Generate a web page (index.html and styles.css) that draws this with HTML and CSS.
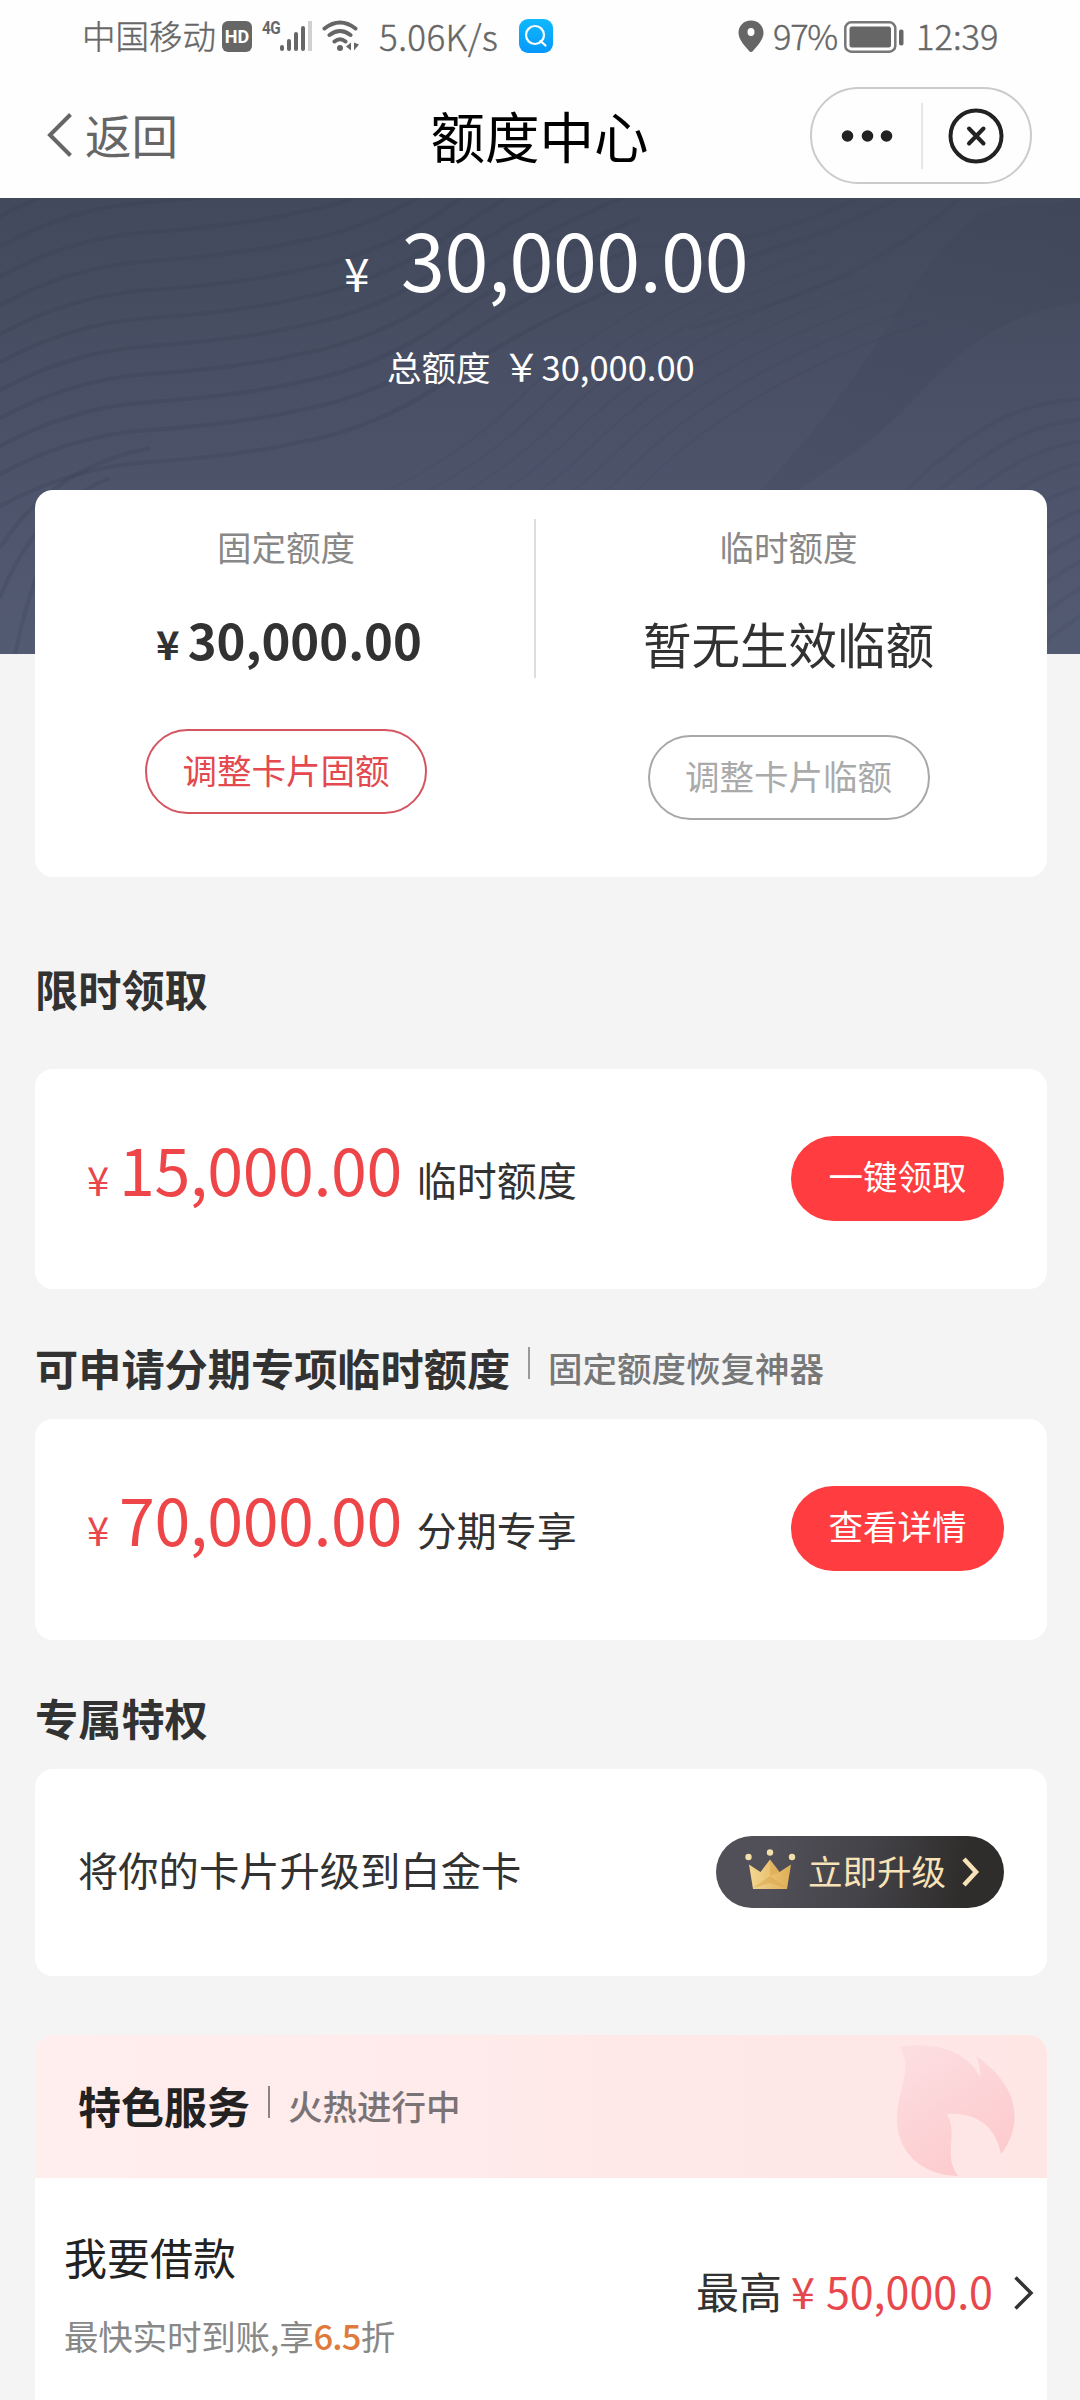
FILE: index.html
```html
<!DOCTYPE html>
<html lang="zh-CN">
<head>
<meta charset="utf-8">
<title>额度中心</title>
<link rel="stylesheet" href="styles.css">
</head>
<body>
<div class="screen">
  <header class="status">
    <span class="carrier">中国移动</span>
    <span class="hd">HD</span>
    <span class="net">4G</span>
    <svg class="signal" width="34" height="32" viewBox="0 0 34 32" stroke="#666" stroke-width="4" stroke-linecap="round">
      <path d="M2 27v2M9 21v8M16 14v15M23 8v21"/>
      <path d="M30 1v30" stroke="#d0d0d0" stroke-linecap="butt"/>
    </svg>
    <svg class="wifi" width="38" height="32" viewBox="0 0 38 32" fill="none" stroke="#666" stroke-width="4" stroke-linecap="round">
      <path d="M2.500 8.500Q18-3.500 33.500 8.500M7.500 15Q18 7 28.500 15M12.500 21.500Q18 17 23.500 21.500"/>
      <circle cx="18" cy="28" r="3" fill="#666" stroke="none"/>
      <path d="M29 22.500v8l-5-4zM32 22.500v8l5-6z" fill="#666" stroke="none"/>
    </svg>
    <span class="speed">5.06K/s</span>
    <span class="search-app">
      <svg width="34" height="34" viewBox="0 0 34 34" fill="none" stroke="#fff" stroke-width="2.200" stroke-linecap="round"><circle cx="16" cy="16" r="9"/><path d="M21.500 22l5 4.500"/></svg>
    </span>
    <svg class="pin" width="26" height="33" viewBox="0 0 26 33"><path fill="#666" fill-rule="evenodd" d="M13 0.500C5.500 .5.500 6 .5 13 .5 20 8 27 11 31q2 2 4 0C18 27 25.500 20 25.500 13 25.500 6 20.500.5 13 .5zM13 8a3.500 4 0 1 1 0 8 3.500 4 0 1 1 0-8z"/></svg>
    <span class="percent">97%</span>
    <svg class="battery" width="60" height="32" viewBox="0 0 60 32"><rect x="1.300" y="1.300" width="50" height="29.400" rx="6" fill="none" stroke="#777" stroke-width="2.500"/><rect x="5.500" y="5.500" width="41.500" height="21" rx="2.500" fill="#666"/><rect x="55" y="8.500" width="4.500" height="16" rx="2" fill="#666"/></svg>
    <span class="time">12:39</span>
  </header>

  <nav class="nav">
    <div class="back">
      <svg width="26" height="44" viewBox="0 0 26 44" fill="none" stroke="#666" stroke-width="4"><path d="M23.500 1.500L3 22l20.500 20.500"/></svg>
      <span>返回</span>
    </div>
    <h1 class="title">额度中心</h1>
    <div class="capsule">
      <svg class="dots" width="52" height="14" viewBox="0 0 52 14" fill="#222"><circle cx="6.500" cy="7" r="5.800"/><circle cx="26.500" cy="7" r="5.800"/><circle cx="45.500" cy="7" r="5.800"/></svg>
      <span class="capsule-line"></span>
      <svg class="close" width="56" height="56" viewBox="0 0 56 56" fill="none" stroke="#222" stroke-width="4" stroke-linecap="round"><circle cx="28" cy="28" r="25.500"/><path d="M21 20.500l14.500 15M35.500 20.500L21 35.500"/></svg>
    </div>
  </nav>

  <section class="hero">
    <svg class="waves" width="1080" height="457" viewBox="0 0 1080 457" fill="none">
      <defs>
        <path id="ripple" d="M-20 90Q60 40 150 34T300 14Q380 0 450-50T640-150"/>
        <path id="arc" d="M850 470C850 400 870 320 930 270S1030 200 1100 200"/>
        <path id="weave" d="M250 340Q420 300 520 200T800 40"/>
        <linearGradient id="shade" x1="0" y1="0" x2="1" y2="1">
          <stop offset="0" stop-color="#333a50" stop-opacity="0"/>
          <stop offset=".48" stop-color="#333a50" stop-opacity=".12"/>
          <stop offset="1" stop-color="#333a50" stop-opacity=".3"/>
        </linearGradient>
      </defs>
      <path fill="url(#shade)" d="M560 457C740 330 810 250 900 110S1000 20 1080 0V105C960 120 930 200 860 250S680 360 600 457z"/>
      <g stroke="#343c52" stroke-opacity=".2" stroke-width="4">
        <use href="#ripple" y="-60"/><use href="#ripple" y="-30"/><use href="#ripple"/><use href="#ripple" y="29"/><use href="#ripple" y="58"/><use href="#ripple" y="86"/><use href="#ripple" y="114"/><use href="#ripple" y="142"/><use href="#ripple" y="170"/><use href="#ripple" y="198"/><use href="#ripple" y="230"/>
        <path d="M0 350Q50 270 150 250M0 400Q35 310 110 280M15 457Q30 380 60 330"/>
      </g>
      <g stroke="#383f56" stroke-opacity=".1" stroke-width="2">
        <use href="#weave"/><use href="#weave" x="18" y="12"/><use href="#weave" x="36" y="24"/><use href="#weave" x="54" y="36"/><use href="#weave" x="72" y="48"/><use href="#weave" x="90" y="60"/><use href="#weave" x="108" y="72"/><use href="#weave" x="126" y="84"/>
      </g>
      <g stroke="#39415a" stroke-opacity=".17" stroke-width="4">
        <use href="#arc"/><use href="#arc" x="12" y="20"/><use href="#arc" x="24" y="40"/><use href="#arc" x="36" y="60"/><use href="#arc" x="48" y="80"/><use href="#arc" x="60" y="100"/><use href="#arc" x="72" y="120"/><use href="#arc" x="84" y="140"/><use href="#arc" x="96" y="160"/><use href="#arc" x="108" y="180"/>
        <path d="M540 40Q600 50 680 48T860 0M600 90Q760 70 900 0M690 130Q860 90 960 0"/>
      </g>
    </svg>
    <div class="available"><span class="yen">¥</span><span class="sum">30,000.00</span></div>
    <div class="total"><span>总额度</span><span class="total-yen">￥</span><span>30,000.00</span></div>
  </section>

  <main class="content">
    <section class="card limits">
      <div class="limit">
        <div class="limit-name">固定额度</div>
        <div class="limit-sum"><span class="limit-yen">¥</span>30,000.00</div>
        <button class="pill pill-red">调整卡片固额</button>
      </div>
      <div class="limit-line"></div>
      <div class="limit">
        <div class="limit-name">临时额度</div>
        <div class="limit-none">暂无生效临额</div>
        <button class="pill pill-grey">调整卡片临额</button>
      </div>
    </section>

    <h2 class="heading heading-claim">限时领取</h2>
    <section class="card offer">
      <span class="offer-yen">¥</span><span class="offer-sum">15,000.00</span><span class="offer-name">临时额度</span>
      <button class="action">一键领取</button>
    </section>

    <h2 class="heading heading-apply">可申请分期专项临时额度<span class="bar"></span><span class="hint">固定额度恢复神器</span></h2>
    <section class="card offer offer-apply">
      <span class="offer-yen">¥</span><span class="offer-sum">70,000.00</span><span class="offer-name">分期专享</span>
      <button class="action">查看详情</button>
    </section>

    <h2 class="heading heading-perk">专属特权</h2>
    <section class="card perk">
      <span class="perk-text">将你的卡片升级到白金卡</span>
      <button class="upgrade">
        <svg class="crown" width="52" height="42" viewBox="0 0 52 42">
          <defs><linearGradient id="gold" x1="0" x2="1"><stop offset="0" stop-color="#f3d791"/><stop offset="1" stop-color="#dfae55"/></linearGradient></defs>
          <path fill="url(#gold)" d="M5 15.500l11.500 7.500L26 10.500l9.500 12.500L47 15.500 43 40H9z"/>
          <path fill="#d9a44c" fill-opacity=".5" d="M26 10.500l9.500 12.500L26 27zM9 39l17-12 17 12-17-5z"/>
          <circle cx="4.500" cy="8" r="3.200" fill="#f2dfaa"/><circle cx="26" cy="3.500" r="3.200" fill="#f2dfaa"/><circle cx="48" cy="8" r="3.200" fill="#f2dfaa"/>
        </svg>
        <span>立即升级</span>
        <svg class="go" width="18" height="30" viewBox="0 0 18 30" fill="none" stroke="#f8e2b8" stroke-width="4.500"><path d="M2 2l12 13L2 28"/></svg>
      </button>
    </section>

    <section class="card service">
      <div class="service-head">
        <h2 class="service-title">特色服务</h2><span class="bar"></span><span class="hint service-hint">火热进行中</span>
        <svg class="flame" width="118" height="132" viewBox="0 0 118 132">
          <defs><linearGradient id="fire" x1="0" y1="0" x2=".55" y2="1"><stop offset="0" stop-color="#fcdfe2"/><stop offset="1" stop-color="#fdcbce"/></linearGradient></defs>
          <path fill="url(#fire)" d="M3 2C45-4 72 10 83 32Q84 22 79 11C132 48 120 89 104 109C99 82 80 67 50 69C62 91 45 109 61 131C25 130 1 108 0 76C-1 48 17 25 3 2z"/>
        </svg>
      </div>
      <div class="service-row">
        <div class="loan">
          <div class="loan-name">我要借款</div>
          <div class="loan-note">最快实时到账,享<b class="rate">6.5</b>折</div>
        </div>
        <div class="max"><span>最高</span><span class="max-yen">¥</span><span class="max-sum">50,000.0</span>
          <svg class="more" width="22" height="34" viewBox="0 0 22 34" fill="none" stroke="#333" stroke-width="3.500"><path d="M2.500 1.500L18 17 2.500 32.500"/></svg>
        </div>
      </div>
    </section>
  </main>
</div>
</body>
</html>
```
FILE: styles.css
```css
* { box-sizing: border-box; }
body {
  margin: 0;
  background: #f4f4f4;
  color: #323232;
  font-family: "Noto Sans CJK SC", sans-serif;
}
h1, h2 { margin: 0; }
button { font: inherit; padding: 0; border: 0; }
svg { display: block; flex: none; }
span { white-space: nowrap; }
.screen { width: 1080px; height: 2400px; overflow: hidden; }

/* status bar */
.status {
  display: flex;
  height: 74px;
  padding-left: 82px;
  background: #fefefe;
  color: #666;
  line-height: 74px;
}
.carrier { width: 140px; font-size: 33.500px; line-height: 70px; font-weight: 300; -webkit-text-stroke: .4px #666; }
.hd {
  width: 30px;
  height: 31px;
  margin-top: 21px;
  border-radius: 6px;
  background: #666;
  color: #fff;
  font: bold 18px/31px Roboto, sans-serif;
  text-align: center;
}
.net { width: 26px; margin-left: 10px; font: bold 18px/55px Roboto, sans-serif; letter-spacing: -.5px; transform: scaleX(.85); transform-origin: left; }
.signal { margin: 20px 0 0 -8px; }
.wifi { margin: 20px 0 0 8px; }
.speed { width: 139px; margin-left: 19px; font-size: 35px; letter-spacing: .4px; font-weight: 300; -webkit-text-stroke: .4px #666; line-height: 71px; }
.search-app { width: 34px; height: 34px; margin: 19px 0 0 1px; border-radius: 9px; background: linear-gradient(#0fb9fb, #0798fb); }
.pin { margin: 20px 0 0 185px; }
.percent { width: 71px; margin-left: 9px; font-size: 34.500px; letter-spacing: -1.300px; font-weight: 300; -webkit-text-stroke: .4px #666; line-height: 71px; }
.battery { margin-top: 21px; }
.time { margin-left: 12px; font-size: 34.500px; font-weight: 300; -webkit-text-stroke: .4px #666; line-height: 71px; }

/* navigation */
.nav {
  display: grid;
  grid-template-columns: 1fr auto 1fr;
  height: 124px;
  padding: 0 48px 0 47px;
  background: #fefefe;
}
.back { display: flex; color: #666; font-size: 46.500px; line-height: 119px; }
.back svg { margin: 39px 12px 0 0; }
.title { color: #000; font-size: 54.500px; font-weight: 400; line-height: 122px; }
.capsule {
  display: flex;
  align-items: center;
  justify-self: end;
  width: 222px;
  height: 97px;
  margin-top: 13px;
  border: 2px solid #cbcbcb;
  border-radius: 49px;
}
.dots { margin-left: 29px; }
.capsule-line { width: 2px; height: 66px; margin: 0 25px 0 28px; background: #e6e6e6; }

/* hero */
.hero { position: relative; height: 456px; overflow: hidden; background: linear-gradient(#42495b, #4a5066 45%, #535b73); color: #fff; }
.waves { position: absolute; inset: 0; }
.available, .total { position: relative; display: flex; align-items: baseline; }
.available { padding-left: 344px; line-height: 120px; }
.yen { width: 57px; font-size: 46px; }
.sum { font-size: 79px; letter-spacing: -.4px; }
.total { margin-top: 3px; padding-left: 387px; font-size: 34.500px; line-height: 60px; }
.total-yen { width: 51px; padding-left: 12px; font-size: 38px; }

/* cards */
.content { padding: 0 33px 0 35px; }
.card { border-radius: 18px; background: #fff; }
.limits { position: relative; display: grid; grid-template-columns: 499px 2px 507px; height: 387px; margin-top: -164px; }
.limit { display: flex; flex-direction: column; align-items: center; padding: 26px 0 0 3px; }
.limit:last-child { padding: 26px 2px 0 0; }
.limit-name { color: #888; font-size: 34.500px; line-height: 60px; }
.limit-line { height: 159px; margin-top: 29px; background: #ddd; }
.limit-sum { margin-top: 28px; padding-left: 6px; font-size: 49px; font-weight: 700; line-height: 70px; }
.limit-yen { margin-right: 8px; font-size: 40px; }
.limit-none { margin-top: 32px; font-size: 48.500px; line-height: 70px; }
.pill { width: 282px; height: 85px; border: 2px solid; border-radius: 43px; background: #fff; font-size: 34.500px; line-height: 76px; padding-bottom: 6px; }
.pill-red { margin-top: 51px; border-color: #d45560; color: #e3494f; }
.pill-grey { margin-top: 57px; border-color: #a8a8a8; color: #aaa; }

.heading { display: flex; font-size: 43.200px; font-weight: 700; line-height: 60px; }
.heading-claim { margin-top: 81px; }
.heading-apply { margin-top: 48px; }
.heading-perk { margin-top: 47px; }
.bar { width: 2px; height: 32px; margin: 10px 18px 0; background: #999; }
.hint { color: #777; font-size: 34.500px; font-weight: 500; }

.offer { display: flex; align-items: baseline; height: 220px; margin-top: 51px; padding: 0 43px 0 52px; line-height: 199px; }
.offer-apply { margin-top: 22px; height: 221px; }
.offer-yen { width: 32px; color: #e8474c; font-size: 40px; }
.offer-sum { color: #ee4549; font-size: 64.500px; letter-spacing: -.4px; }
.offer-name { margin-left: 15px; font-size: 40px; }
.action { align-self: flex-start; width: 213px; height: 85px; margin: 67px 0 0 auto; padding-bottom: 6px; border-radius: 43px; background: #ff3d40; color: #fff; font-size: 34.500px; line-height: 79px; }

.perk { display: flex; justify-content: space-between; height: 207px; margin-top: 22px; padding: 0 43px; }
.perk-text { font-size: 40.300px; line-height: 200px; }
.upgrade {
  display: flex;
  width: 288px;
  height: 72px;
  margin-top: 67px;
  padding-left: 28px;
  border-radius: 36px;
  background: linear-gradient(100deg, #514f57 20%, #45444a 50%, #2f2d2b 85%);
  color: #f8e2b8;
  font-size: 34.500px;
  line-height: 69px;
}
.crown { margin: 13px 12px 0 0; }
.go { margin: 21px 0 0 16px; }

/* featured services */
.service { height: 420px; margin-top: 59px; overflow: hidden; }
.service-head { position: relative; display: flex; height: 143px; padding-left: 43px; background: linear-gradient(90deg, #ffeeee, #fee6e5); line-height: 142px; }
.service-title { color: #222; font-size: 43px; font-weight: 700; line-height: 141px; }
.service-head .bar { margin: 51px 18px 0 18px; background: #8d8385; }
.service-hint { color: #7a7375; line-height: 141px; }
.flame { position: absolute; left: 862px; top: 10px; }
.service-row { display: flex; justify-content: space-between; padding: 48px 12px 0 29px; }
.loan-name { color: #222; font-size: 43px; line-height: 60px; }
.loan-note { margin-top: 19px; color: #888; font-size: 34.500px; line-height: 60px; letter-spacing: -.2px; }
.rate { color: #e07a3a; font-weight: 500; letter-spacing: -.8px; }
.max { display: flex; height: 60px; margin-top: 34px; font-size: 43px; line-height: 60px; }
.max-yen { margin-left: 9px; color: #e4474c; }
.max-sum { margin-left: 11px; color: #e8474c; }
.more { margin: 16px 0 0 20px; }
```
